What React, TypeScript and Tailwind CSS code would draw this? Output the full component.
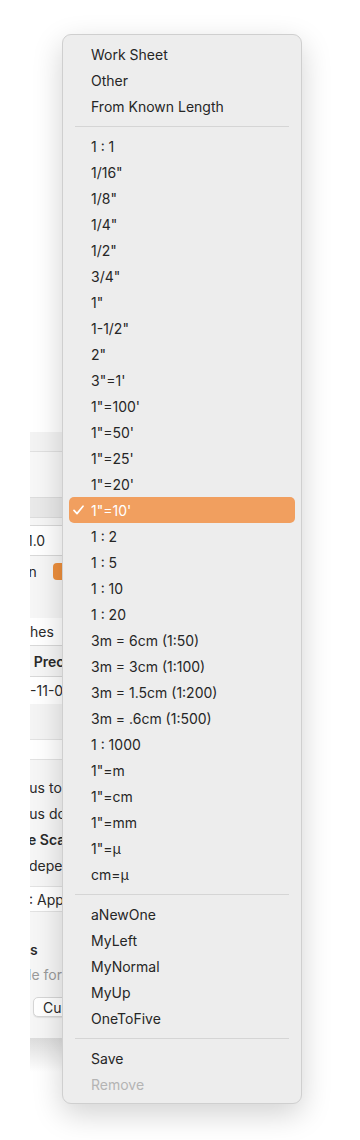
import React from "react";

const groupA = ["Work Sheet", "Other", "From Known Length"];
const groupB = [
  "1 : 1",
  "1/16\"",
  "1/8\"",
  "1/4\"",
  "1/2\"",
  "3/4\"",
  "1\"",
  "1-1/2\"",
  "2\"",
  "3\"=1'",
  "1\"=100'",
  "1\"=50'",
  "1\"=25'",
  "1\"=20'",
  "1\"=10'",
  "1 : 2",
  "1 : 5",
  "1 : 10",
  "1 : 20",
  "3m = 6cm (1:50)",
  "3m = 3cm (1:100)",
  "3m = 1.5cm (1:200)",
  "3m = .6cm (1:500)",
  "1 : 1000",
  "1\"=m",
  "1\"=cm",
  "1\"=mm",
  "1\"=µ",
  "cm=µ",
];
const groupC = ["aNewOne", "MyLeft", "MyNormal", "MyUp", "OneToFive"];

function Item({ label, selected, disabled }: { label: string; selected?: boolean; disabled?: boolean }) {
  return (
    <div
      className={
        "mx-[6px] h-[26px] pl-[4px] flex items-center rounded-[5px] text-[14px] " +
        (selected ? "bg-[#f19f5f] text-white" : disabled ? "text-[#b4b4b4]" : "text-[#262626]")
      }
    >
      <span className="w-[18px] flex items-center">
        {selected ? (
          <svg width="11" height="10" viewBox="0 0 11 10" fill="none">
            <path d="M1 5.4 L4 8.6 L10 1.2" stroke="white" strokeWidth="1.7" strokeLinecap="round" strokeLinejoin="round" />
          </svg>
        ) : null}
      </span>
      <span>{label}</span>
    </div>
  );
}

function Sep() {
  return (
    <div className="h-[14px] flex items-center px-[12px]">
      <div className="h-px w-full bg-[#d5d5d5]" />
    </div>
  );
}

function BgWindow() {
  return (
    <div className="absolute left-[30px] top-[432px] w-[60px] h-[640px] overflow-hidden">
      <div className="w-[200px] h-[606px] bg-[#f6f6f6] text-[14px] text-[#2a2a2a] flex flex-col ml-[-20px]">
        <div className="h-[20px] border-b border-[#e0e0e0] bg-[#f3f3f3]" />
        <div className="h-[45px] bg-[#f7f7f7]" />
        <div className="h-[21px] bg-[#e9e9e9] border-y border-[#dcdcdc]" />
        <div className="h-[7px]" />
        <div className="h-[31px] bg-white border-y border-[#d8d8d8] flex items-center pl-[17px]">1.0</div>
        <div className="h-[30px] flex items-center pl-[15px]">
          <span>in</span>
          <span className="ml-[16px] w-[16px] h-[17px] rounded-[4px] bg-[#ee8f3c]" />
        </div>
        <div className="h-[32px]" />
        <div className="h-[28px] bg-white border-b border-[#d8d8d8] flex items-center pl-[0px]">Inches</div>
        <div className="h-[30px] flex items-center pl-[12px] font-semibold">
          <span className="text-[#888] font-normal">e</span>&nbsp;Precision
        </div>
        <div className="h-[28px] bg-white border-t border-[#d8d8d8] flex items-center pl-[3px]">22-11-08</div>
        <div className="h-[35px] bg-[#f4f4f4]" />
        <div className="h-[21px] bg-white border-y border-[#e2e2e2]" />
        <div className="h-[14px]" />
        <div className="h-[26px] flex items-center pl-[7px]">Plus to</div>
        <div className="h-[26px] flex items-center pl-[7px]">Plus do</div>
        <div className="h-[26px] flex items-center font-semibold pl-[18px]">e Scale</div>
        <div className="h-[26px] flex items-center pl-[7px]">Independent</div>
        <div className="h-[8px]" />
        <div className="h-[26px] bg-white border-y border-[#e2e2e2] flex items-center pl-[19px]">: Apply</div>
        <div className="h-[24px]" />
        <div className="h-[26px] flex items-center pl-[20px] font-semibold">s</div>
        <div className="h-[24px] flex items-center pl-[18px] text-[#9a9a9a]">le for</div>
        <div className="h-[10px]" />
        <div className="h-[22px] flex items-center pl-[23px]">
          <span className="h-[20px] px-[9px] flex items-center bg-white rounded-[5px] border border-[#d6d6d6] shadow-[0_1px_1px_rgba(0,0,0,0.08)]">
            Current
          </span>
        </div>
        <div className="flex-1" />
      </div>
      <div className="h-[34px] w-full bg-gradient-to-b from-[#dcdcdc] to-white" />
    </div>
  );
}

export default function App() {
  return (
    <div className="relative w-[360px] h-[1140px] bg-white overflow-hidden" style={{ fontFamily: "Inter, 'Noto Sans', sans-serif" }}>
      <BgWindow />
      <div className="absolute left-[62px] top-[34px] w-[240px] h-[1070px] bg-[#ededed] border border-[#cfcfcf] rounded-[9px] shadow-[0_10px_30px_rgba(0,0,0,0.18)] pt-[6px] pb-[6px]">
        {groupA.map((l) => (
          <Item key={l} label={l} />
        ))}
        <Sep />
        {groupB.map((l) => (
          <Item key={l} label={l} selected={l === "1\"=10'"} />
        ))}
        <Sep />
        {groupC.map((l) => (
          <Item key={l} label={l} />
        ))}
        <Sep />
        <Item label="Save" />
        <Item label="Remove" disabled />
      </div>
    </div>
  );
}
